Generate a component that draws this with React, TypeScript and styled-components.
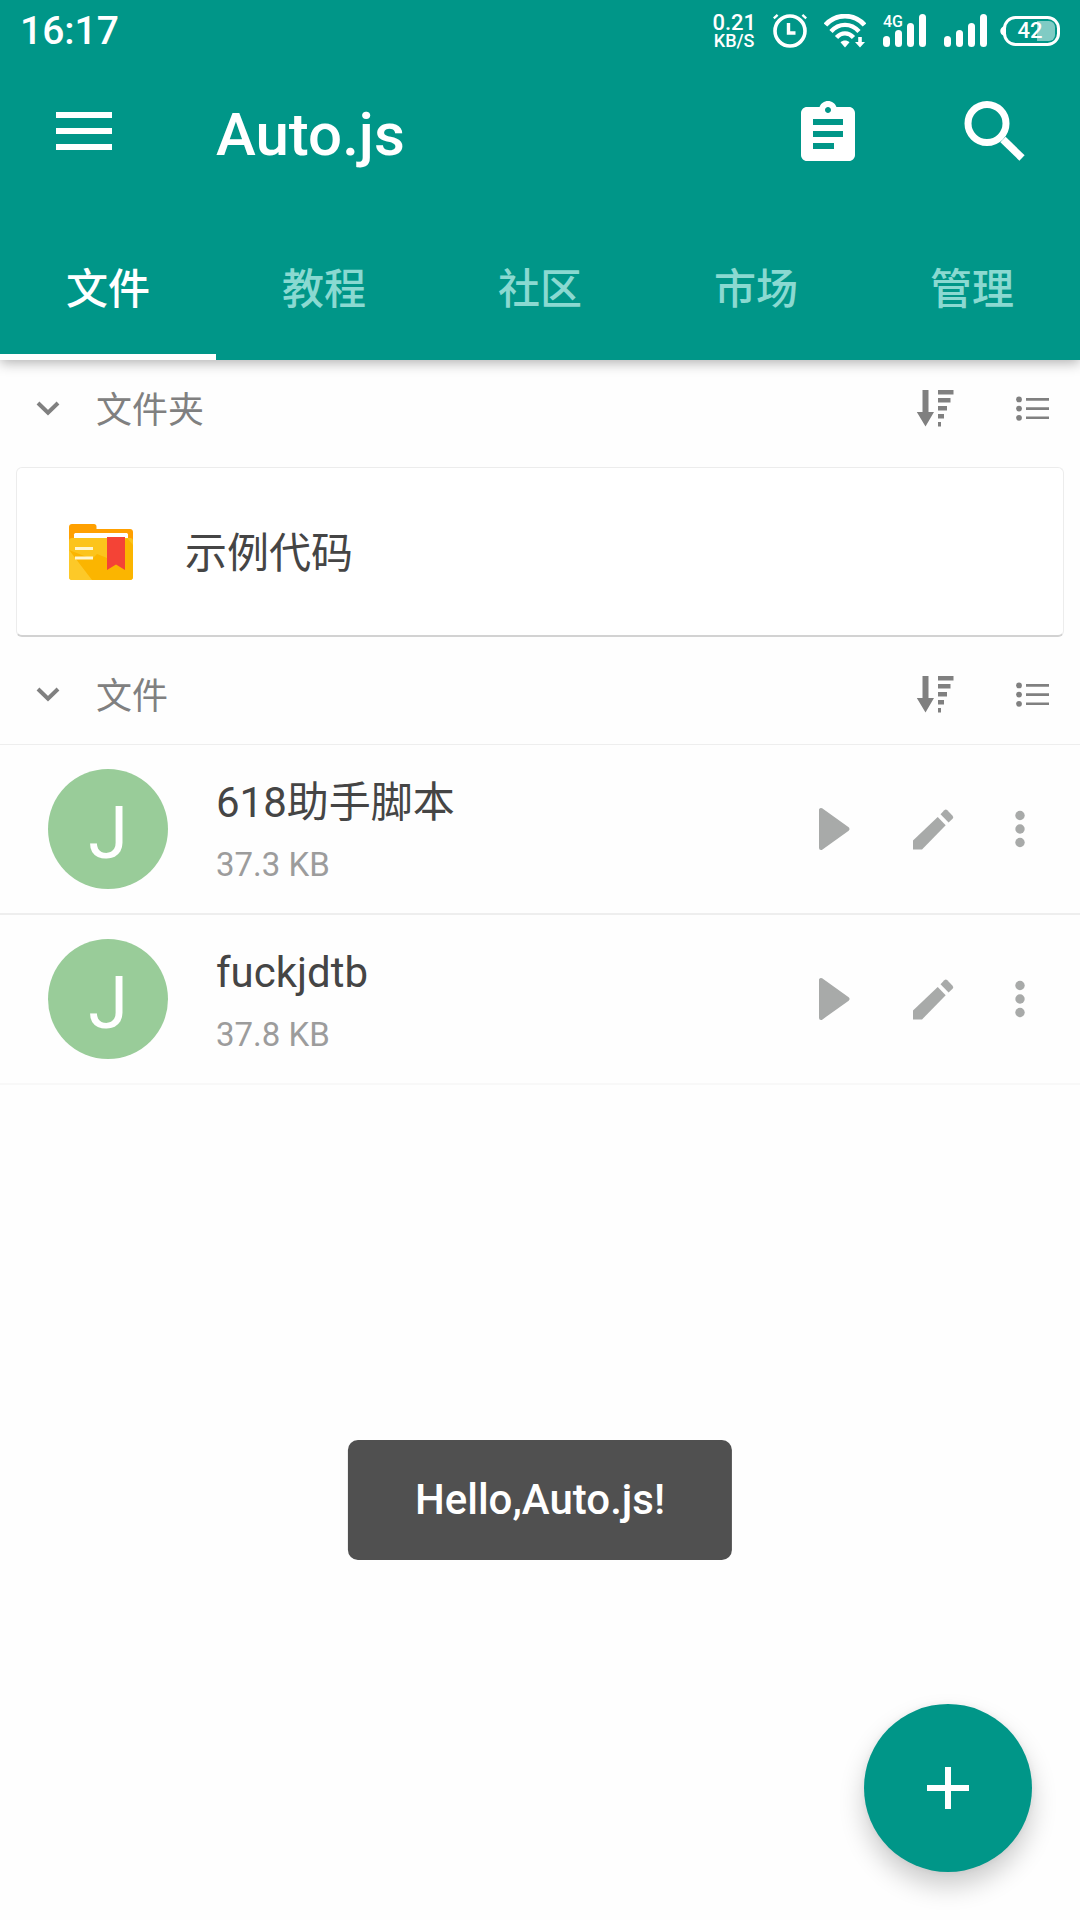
import React, { useState } from 'react';
import styled, { createGlobalStyle } from 'styled-components';

const teal = '#009688';

const GlobalStyle = createGlobalStyle`
  *, *::before, *::after { box-sizing: border-box; }
  body {
    margin: 0;
    background: #fefefe;
    font-family: Roboto, "Noto Sans CJK SC", sans-serif;
    color: #454545;
  }
  button {
    margin: 0;
    padding: 0;
    border: 0;
    background: none;
    color: inherit;
    font: inherit;
    cursor: pointer;
  }
  svg { display: block; flex: none; }
`;

const Page = styled.div`
  min-height: 100vh;
  display: flex;
  flex-direction: column;
`;

const AppBar = styled.header`
  background: ${teal};
  color: #fff;
  box-shadow: 0 3px 12px rgba(0, 0, 0, 0.3);
`;

const StatusBar = styled.div`
  height: 52px;
  padding: 10px 20px 0 20px;
  display: flex;
  align-items: center;
  justify-content: space-between;
`;

const Clock = styled.time`
  font-size: 39px;
  line-height: 44px;
  font-weight: 500;
`;

const StatusGroup = styled.div<{ $gap: number }>`
  display: flex;
  align-items: center;
  gap: ${(p) => p.$gap}px;
`;

const Speed = styled.div`
  display: flex;
  flex-direction: column;
  align-items: center;
  font-weight: 500;
`;

const SpeedValue = styled.span`
  font-size: 22px;
  line-height: 20px;
`;

const SpeedUnit = styled.span`
  font-size: 18px;
  line-height: 16px;
`;

const Signal = styled.div`
  position: relative;
`;

const NetworkType = styled.span`
  position: absolute;
  top: 0;
  left: 0;
  font-size: 16px;
  line-height: 16px;
  font-weight: 500;
`;

const Battery = styled.div`
  position: relative;
`;

const BatteryLevel = styled.span`
  position: absolute;
  inset: 0;
  display: flex;
  align-items: center;
  justify-content: center;
  font-size: 22px;
  line-height: 24px;
  font-weight: 500;
`;

const Toolbar = styled.div`
  height: 164px;
  padding: 0 50px 0 48px;
  display: flex;
  align-items: center;
`;

const Title = styled.h1`
  flex: 1;
  margin: 0 0 0 96px;
  padding-top: 2px;
  font-size: 60px;
  line-height: 72px;
  font-weight: 500;
`;

const ToolbarActions = styled.div`
  display: flex;
  gap: 94px;
`;

const Tabs = styled.div`
  display: flex;
`;

const Tab = styled.button<{ $active: boolean }>`
  flex: 1;
  height: 144px;
  padding-top: 10px;
  border-bottom: 6px solid ${(p) => (p.$active ? '#fff' : 'transparent')};
  color: ${(p) => (p.$active ? '#fff' : '#8ad9d1')};
  font-size: 42px;
  line-height: 60px;
  font-weight: 500;
`;

const Content = styled.main`
  flex: 1;
`;

const SectionBar = styled.div`
  height: 98px;
  padding: 0 24px 0 30px;
  display: flex;
  align-items: center;
  justify-content: space-between;
  color: #808080;
`;

const SectionToggle = styled.button`
  display: flex;
  align-items: center;
  gap: 30px;
  font-size: 36px;
  line-height: 48px;
`;

const Label = styled.span`
  padding-top: 4px;
`;

const SectionActions = styled.div`
  display: flex;
  gap: 58px;
`;

const FolderCard = styled.button`
  width: calc(100% - 32px);
  height: 170px;
  margin: 9px 16px;
  padding: 0 48px;
  display: flex;
  align-items: center;
  gap: 48px;
  border: 1px solid #ececec;
  border-bottom: 2px solid #d2d2d2;
  border-radius: 6px;
  background: #fff;
  font-size: 42px;
  line-height: 56px;
  text-align: left;
`;

const FileList = styled.ul`
  margin: 0;
  padding: 0;
  list-style: none;
  border-top: 1px solid #eee;
`;

const FileRow = styled.li`
  height: 170px;
  padding: 0 42px 0 48px;
  display: flex;
  align-items: center;
  border-bottom: 2px solid #eee;

  &:last-child {
    border-bottom-color: #f8f8f8;
  }
`;

const Avatar = styled.span`
  flex: none;
  width: 120px;
  height: 120px;
  padding-top: 10px;
  display: flex;
  align-items: center;
  justify-content: center;
  border-radius: 50%;
  background: #99cc99;
  color: #fff;
  font-size: 72px;
  line-height: 84px;
`;

const FileText = styled.div`
  flex: 1;
  min-width: 0;
  margin-left: 48px;
  padding-top: 8px;
  display: flex;
  flex-direction: column;
  gap: 4px;
`;

const FileName = styled.span`
  font-size: 42px;
  line-height: 60px;
`;

const FileSize = styled.span`
  color: #9c9c9c;
  font-size: 33px;
  line-height: 56px;
`;

const FileActions = styled.div`
  display: flex;
  align-items: center;
  gap: 44px;
  color: #a8aaa9;
`;

const Toast = styled.div`
  position: fixed;
  bottom: 360px;
  left: 50%;
  transform: translateX(-50%);
  padding: 30px 67px;
  border-radius: 10px;
  background: #505050;
  color: #fff;
  font-size: 42px;
  line-height: 60px;
  font-weight: 500;
  white-space: nowrap;
`;

const AddButton = styled.button`
  position: fixed;
  right: 48px;
  bottom: 48px;
  width: 168px;
  height: 168px;
  display: flex;
  align-items: center;
  justify-content: center;
  border-radius: 50%;
  background: ${teal};
  color: #fff;
  box-shadow: 0 14px 26px rgba(0, 0, 0, 0.2), 0 0 8px rgba(0, 0, 0, 0.06);
`;

const AlarmIcon = () => (
  <svg width="34" height="34" viewBox="0 0 34 34" fill="none" stroke="currentColor" aria-hidden="true">
    <circle cx="17" cy="17" r="15" strokeWidth="3.6" />
    <path d="M15.5 9v10h7" strokeWidth="3.4" />
    <path d="M.8 4.4 4.6.9M33.2 4.4 29.4.9" strokeWidth="2.4" />
  </svg>
);

const WifiIcon = () => (
  <svg width="42" height="34" viewBox="0 0 42 34" fill="none" stroke="currentColor" aria-hidden="true">
    <path d="M1.5 11C12-.8 30-.8 40.5 11" strokeWidth="4.8" />
    <path d="M7 17.5c8-8.8 20-8.8 28 0" strokeWidth="4.4" />
    <path d="M12.5 23.5c5-5.5 12-5.5 17 0" strokeWidth="4.4" />
    <path d="m21 33.5-4.5-5.2c2.6-2.5 6.4-2.500 9 0z" fill="currentColor" stroke="none" />
    <path d="M34.2 23h3.6v5H41l-5 5.500-5-5.500h3.200z" fill="currentColor" stroke="none" />
  </svg>
);

const SignalBars = () => (
  <svg width="44" height="34" viewBox="0 0 44 34" fill="currentColor" aria-hidden="true">
    <rect x="0" y="22" width="7" height="11" rx="3.5" />
    <rect x="12" y="16" width="7" height="17" rx="3.5" />
    <rect x="24" y="9" width="7" height="24" rx="3.5" />
    <rect x="36" y="0" width="7" height="33" rx="3.5" />
  </svg>
);

const BatteryIcon = () => (
  <svg width="60" height="30" viewBox="0 0 60 30" aria-hidden="true">
    <path d="M37 5h12a6 6 0 0 1 6 6v8a6 6 0 0 1-6 6H37z" fill="#fff" fillOpacity=".5" />
    <rect x="4.5" y="1.5" width="54" height="27" rx="11" fill="none" stroke="#fff" strokeWidth="3" />
    <path d="M4 10v10c-5-2-5-8 0-10z" fill="#fff" />
  </svg>
);

const MenuIcon = () => (
  <svg width="72" height="72" viewBox="0 0 72 72" fill="currentColor" aria-hidden="true">
    <path d="M8 14h56v6H8zM8 30h56v6H8zM8 46h56v6H8z" />
  </svg>
);

const ClipboardIcon = () => (
  <svg width="72" height="72" viewBox="0 0 24 24" fill="currentColor" aria-hidden="true">
    <path d="M19 3h-4.180C14.400 1.840 13.300 1 12 1c-1.300 0-2.400.84-2.820 2H5c-1.100 0-2 .9-2 2v14c0 1.100.9 2 2 2h14c1.100 0 2-.9 2-2V5c0-1.100-.9-2-2-2zm-7 0c.55 0 1 .45 1 1s-.45 1-1 1-1-.45-1-1 .45-1 1-1zm2 14H7v-2h7v2zm3-4H7v-2h10v2zm0-4H7V7h10v2z" />
  </svg>
);

const SearchIcon = () => (
  <svg width="72" height="72" viewBox="0 0 72 72" fill="none" stroke="currentColor" strokeWidth="7" aria-hidden="true">
    <circle cx="29" cy="25.500" r="19" />
    <path d="m45 41.500 19 18.500" strokeWidth="7.500" />
  </svg>
);

const ChevronIcon = () => (
  <svg width="36" height="36" viewBox="0 0 36 36" fill="none" stroke="currentColor" strokeWidth="4" aria-hidden="true">
    <path d="m8 12 10 9.800L28 12" />
  </svg>
);

const SortIcon = () => (
  <svg width="42" height="42" viewBox="0 0 42 42" fill="currentColor" aria-hidden="true">
    <path d="M8.500 2h6v22H20L11.500 38.500 2.800 24h5.700z" />
    <path d="M24 2h15.500v4.500H24zM24 10h12.500v4.500H24zM24 18h9v4.500h-9zM24 26h6v4.500h-6zM24 34h3v4.500h-3z" />
  </svg>
);

const ListIcon = () => (
  <svg width="42" height="42" viewBox="0 0 42 42" aria-hidden="true">
    <g fill="currentColor">
      <circle cx="5" cy="11.400" r="2.900" />
      <circle cx="5" cy="20.600" r="2.900" />
      <circle cx="5" cy="29.800" r="2.900" />
    </g>
    <path d="M12 11.400h23M12 20.600h23M12 29.800h23" stroke="currentColor" strokeWidth="2.600" />
  </svg>
);

const FolderIcon = () => (
  <svg width="72" height="72" viewBox="0 0 72 72" aria-hidden="true">
    <path d="M7 8h22c1.500 0 2.500 1 2.500 2.500V13H65c1.800 0 3 1.200 3 3v16H4V11c0-1.800 1.200-3 3-3z" fill="#ffa000" />
    <path d="M9 22v-3.500C9 17.600 9.800 17 11 17h50c1.200 0 2 .6 2 1.500V24H9z" fill="#fff" />
    <path d="M4 25c0-1.800 1.200-3 3-3h58c1.800 0 3 1.200 3 3v36c0 1.800-1.200 3-3 3H7c-1.800 0-3-1.200-3-3z" fill="#fcc41c" />
    <path d="m4 34 22 30h39c1.800 0 3-1.200 3-3V29l-6-7-20 20-10-4-5 5z" fill="#fbb500" />
    <path d="M4 34v27c0 1.800 1.200 3 3 3h20z" fill="#fdc928" />
    <path d="M10 32.500h18M10 42h18" stroke="#fff6d0" strokeWidth="3" />
    <path d="M42 21h18v33l-9-5.500-9 5.500z" fill="#f44336" />
  </svg>
);

const PlayIcon = () => (
  <svg width="60" height="48" viewBox="0 0 60 48" fill="currentColor" stroke="currentColor" strokeWidth="4" strokeLinejoin="round" aria-hidden="true">
    <path d="M15 5v38l26.500-19z" />
  </svg>
);

const PencilIcon = () => (
  <svg width="48" height="48" viewBox="0 0 48 48" fill="currentColor" aria-hidden="true">
    <path d="M3 35.500V44.500h9L35.700 20.200 27.700 12z" />
    <path d="M30.500 9.200 34.300 5.300a2.200 2.200 0 0 1 3 0l5.300 5.400a2.200 2.200 0 0 1 0 3l-4 3.900z" />
  </svg>
);

const MoreIcon = () => (
  <svg width="36" height="48" viewBox="0 0 36 48" fill="currentColor" aria-hidden="true">
    <circle cx="18" cy="10.500" r="4.700" />
    <circle cx="18" cy="24" r="4.700" />
    <circle cx="18" cy="37.500" r="4.700" />
  </svg>
);

const PlusIcon = () => (
  <svg width="42" height="42" viewBox="0 0 42 42" fill="currentColor" aria-hidden="true">
    <path d="M18 0h6v18h18v6H24v18h-6V24H0v-6h18z" />
  </svg>
);

const tabs = ['文件', '教程', '社区', '市场', '管理'];

const files = [
  { name: '618助手脚本', size: '37.3 KB' },
  { name: 'fuckjdtb', size: '37.8 KB' },
];

function SectionHeader({ title, open, onToggle }: { title: string; open: boolean; onToggle: () => void }) {
  return (
    <SectionBar>
      <SectionToggle type="button" aria-expanded={open} onClick={onToggle}>
        <ChevronIcon />
        <Label>{title}</Label>
      </SectionToggle>
      <SectionActions>
        <button type="button" aria-label="排序"><SortIcon /></button>
        <button type="button" aria-label="列表"><ListIcon /></button>
      </SectionActions>
    </SectionBar>
  );
}

export default function App() {
  const [active, setActive] = useState(0);
  const [foldersOpen, setFoldersOpen] = useState(true);
  const [filesOpen, setFilesOpen] = useState(true);

  return (
    <Page>
      <GlobalStyle />
      <AppBar>
        <StatusBar>
          <Clock>16:17</Clock>
          <StatusGroup $gap={12}>
            <StatusGroup $gap={17}>
              <Speed>
                <SpeedValue>0.21</SpeedValue>
                <SpeedUnit>KB/S</SpeedUnit>
              </Speed>
              <AlarmIcon />
              <WifiIcon />
              <Signal>
                <NetworkType>4G</NetworkType>
                <SignalBars />
              </Signal>
              <Signal><SignalBars /></Signal>
            </StatusGroup>
            <Battery>
              <BatteryIcon />
              <BatteryLevel>42</BatteryLevel>
            </Battery>
          </StatusGroup>
        </StatusBar>
        <Toolbar>
          <button type="button" aria-label="菜单"><MenuIcon /></button>
          <Title>Auto.js</Title>
          <ToolbarActions>
            <button type="button" aria-label="日志"><ClipboardIcon /></button>
            <button type="button" aria-label="搜索"><SearchIcon /></button>
          </ToolbarActions>
        </Toolbar>
        <Tabs role="tablist">
          {tabs.map((label, i) => (
            <Tab key={label} type="button" role="tab" aria-selected={i === active} $active={i === active} onClick={() => setActive(i)}>
              {label}
            </Tab>
          ))}
        </Tabs>
      </AppBar>
      <Content>
        <SectionHeader title="文件夹" open={foldersOpen} onToggle={() => setFoldersOpen(!foldersOpen)} />
        {foldersOpen && (
          <FolderCard type="button">
            <FolderIcon />
            <Label>示例代码</Label>
          </FolderCard>
        )}
        <SectionHeader title="文件" open={filesOpen} onToggle={() => setFilesOpen(!filesOpen)} />
        {filesOpen && (
          <FileList>
            {files.map((file) => (
              <FileRow key={file.name}>
                <Avatar>J</Avatar>
                <FileText>
                  <FileName>{file.name}</FileName>
                  <FileSize>{file.size}</FileSize>
                </FileText>
                <FileActions>
                  <button type="button" aria-label="运行"><PlayIcon /></button>
                  <button type="button" aria-label="编辑"><PencilIcon /></button>
                  <button type="button" aria-label="更多"><MoreIcon /></button>
                </FileActions>
              </FileRow>
            ))}
          </FileList>
        )}
      </Content>
      <Toast role="status">Hello,Auto.js!</Toast>
      <AddButton type="button" aria-label="新建"><PlusIcon /></AddButton>
    </Page>
  );
}
